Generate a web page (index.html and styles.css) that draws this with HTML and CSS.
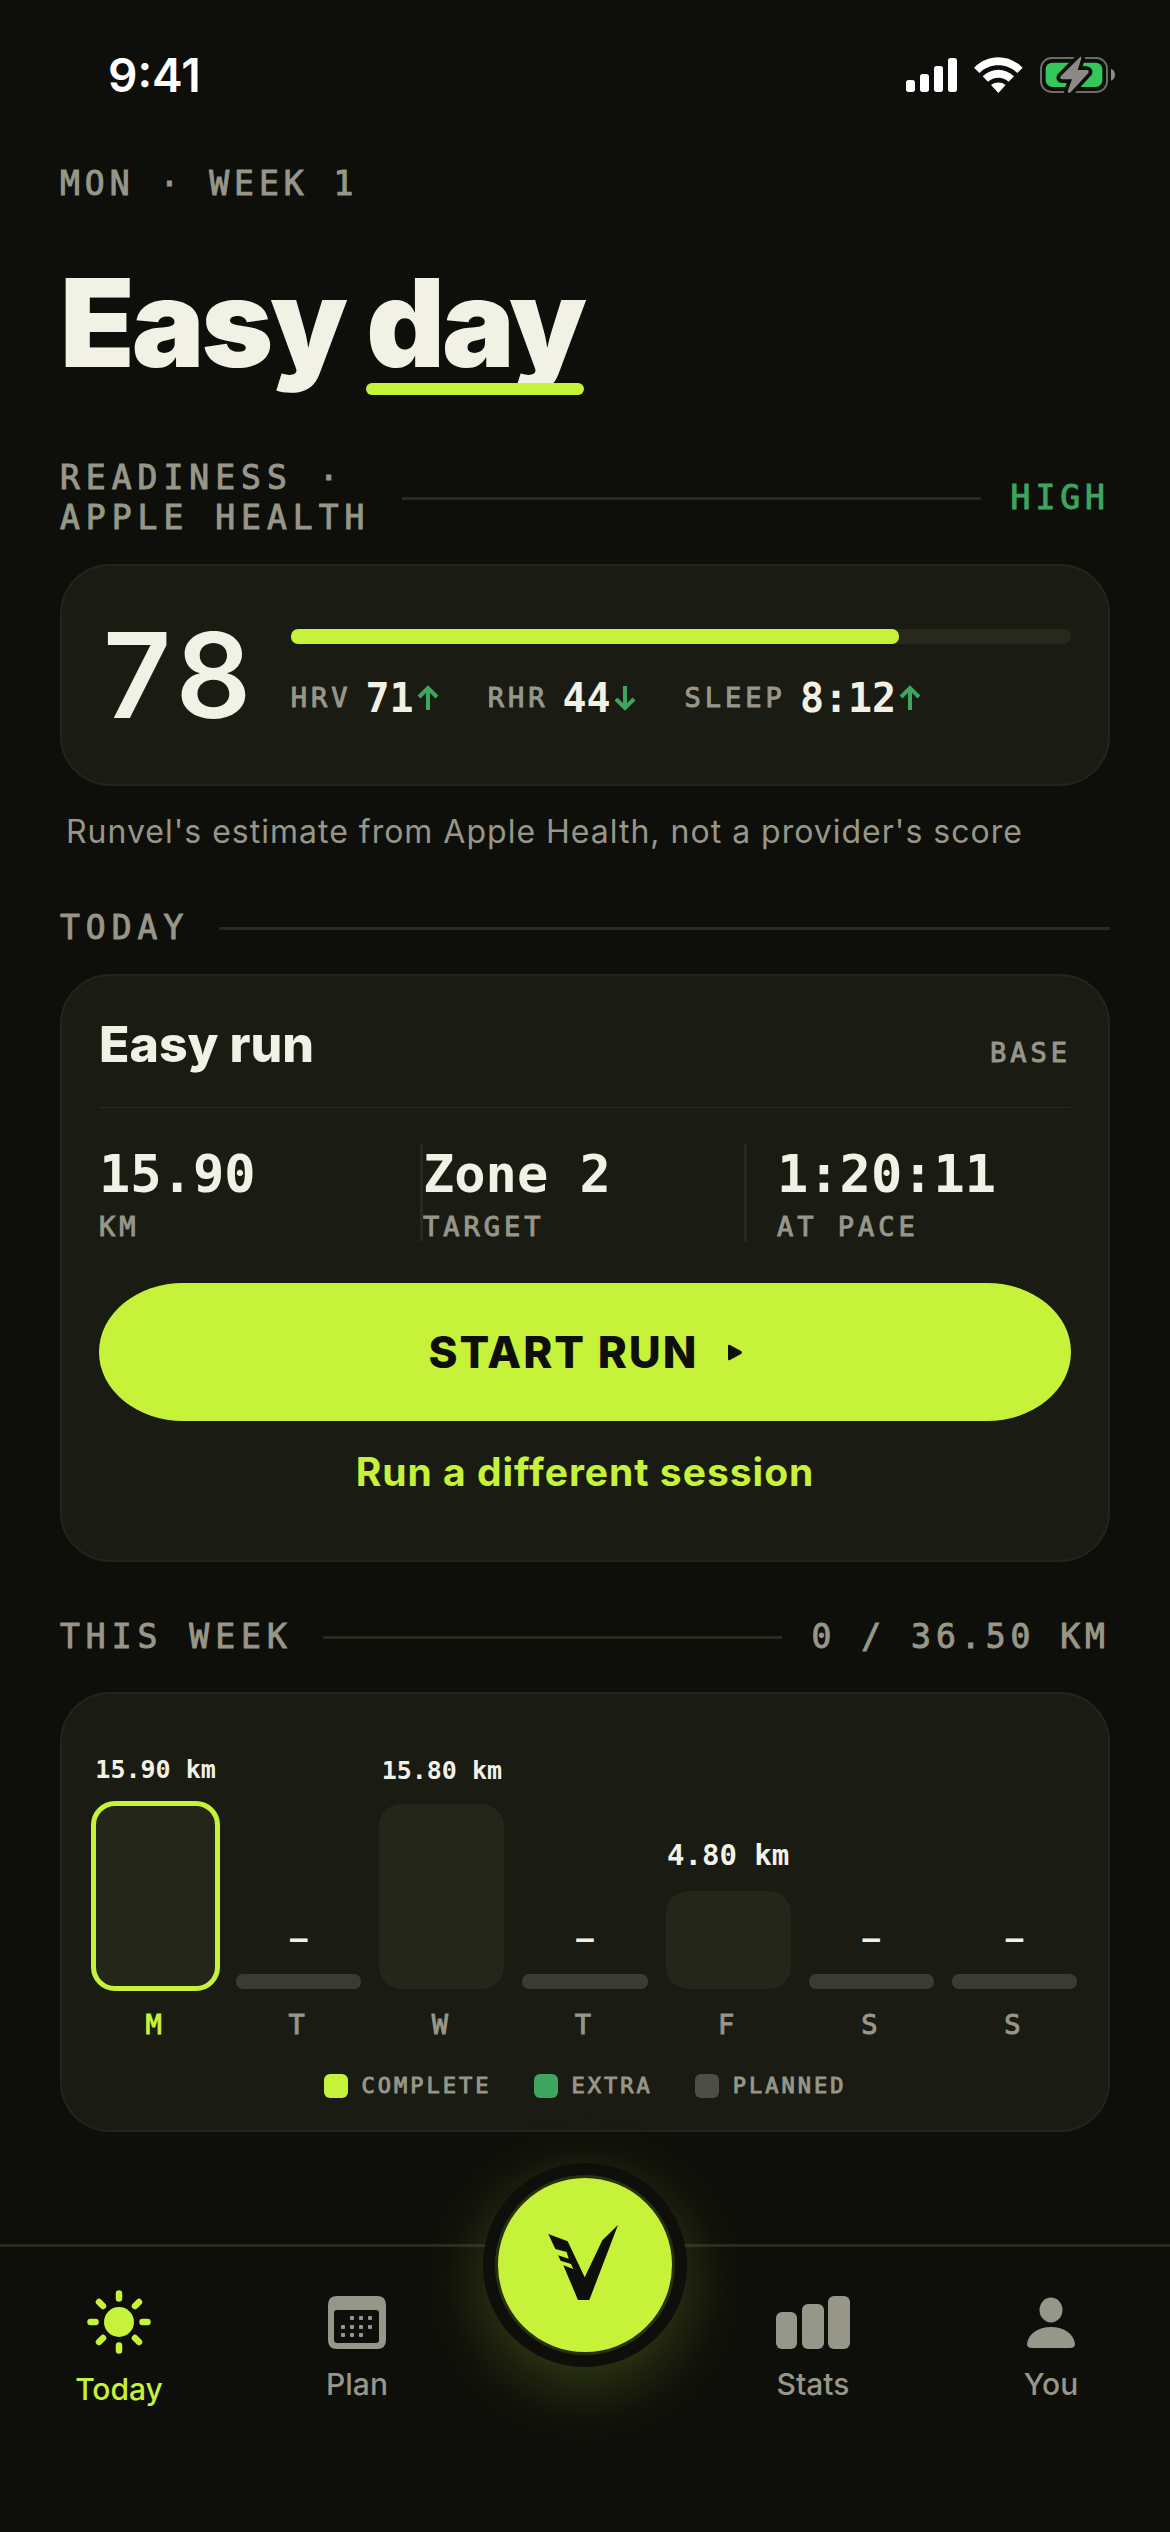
FILE: index.html
```html
<!DOCTYPE html>
<html lang="en">
<head>
<meta charset="utf-8">
<meta name="viewport" content="width=device-width, initial-scale=1">
<title>Today</title>
<link rel="stylesheet" href="styles.css">
</head>
<body>
<svg class="sprite" aria-hidden="true">
  <symbol id="arrow-up" viewBox="0 0 22 26"><path d="M11 25V3M2 12l9-9 9 9" fill="none" stroke="currentColor" stroke-width="4"/></symbol>
  <symbol id="arrow-down" viewBox="0 0 22 26"><path d="M11 1v22M2 14l9 9 9-9" fill="none" stroke="currentColor" stroke-width="4"/></symbol>
</svg>

<header class="status">
  <span class="status-time">9:41</span>
  <span class="status-icons">
    <svg width="51" height="34" viewBox="0 0 153 102" fill="#fff" aria-hidden="true">
      <rect x="0" y="66" width="27" height="36" rx="8"/><rect x="42" y="48" width="27" height="54" rx="8"/><rect x="84" y="24" width="27" height="78" rx="8"/><rect x="126" y="0" width="27" height="102" rx="8"/>
    </svg>
    <svg width="49" height="36" viewBox="0 0 147 108" fill="#fff" aria-hidden="true">
      <path d="M0 32C41-10 105-10 146 32L130 48C98 17 48 17 16 48Z"/>
      <path d="M26 58C53 32 93 32 120 58L104 74C86 58 60 58 42 74Z"/>
      <path d="M51 84C64 74 82 74 95 84L73 108Z"/>
    </svg>
    <svg width="75" height="38" viewBox="0 0 225 114" aria-hidden="true">
      <rect x="3" y="6" width="198" height="102" rx="32" fill="none" stroke="#6c6c69" stroke-width="6"/>
      <path d="M213 38c16 5 16 31 0 36z" fill="#8a8a87"/>
      <rect x="17" y="20" width="170" height="73" rx="20" fill="#34c759"/>
      <path d="M121 2 62 61q-5 8 5 9H96L83 106q2 8 9 3L145 51q4-8-5-9H113L124 7q-1-6-3-5z" fill="#8a8a87" stroke="#0e0f0a" stroke-width="22" stroke-linejoin="round" paint-order="stroke"/>
    </svg>
  </span>
</header>

<main class="screen">
  <p class="eyebrow">MON · WEEK 1</p>
  <h1 class="title">Easy <span class="title-mark">day</span></h1>

  <section>
    <header class="section-head">
      <h2 class="section-label">READINESS · APPLE HEALTH</h2>
      <span class="rule"></span>
      <span class="section-value good">HIGH</span>
    </header>
    <div class="card readiness">
      <span class="score">78</span>
      <div class="readiness-body">
        <div class="meter"><div class="meter-fill" style="width:78%"></div></div>
        <dl class="metrics">
          <div class="metric"><dt>HRV</dt><dd>71<svg class="arrow"><use href="#arrow-up"/></svg></dd></div>
          <div class="metric"><dt>RHR</dt><dd>44<svg class="arrow"><use href="#arrow-down"/></svg></dd></div>
          <div class="metric"><dt>SLEEP</dt><dd>8:12<svg class="arrow"><use href="#arrow-up"/></svg></dd></div>
        </dl>
      </div>
    </div>
    <p class="note">Runvel's estimate from Apple Health, not a provider's score</p>
  </section>

  <section class="section">
    <header class="section-head">
      <h2 class="section-label">TODAY</h2>
      <span class="rule"></span>
    </header>
    <div class="card session">
      <div class="session-head">
        <h3 class="session-name">Easy run</h3>
        <span class="small-label">BASE</span>
      </div>
      <dl class="stats">
        <div class="stat"><dd>15.90</dd><dt class="small-label">KM</dt></div>
        <div class="stat divided"><dd>Zone 2</dd><dt class="small-label">TARGET</dt></div>
        <div class="stat divided inset"><dd>1:20:11</dd><dt class="small-label">AT PACE</dt></div>
      </dl>
      <button class="start" type="button">START RUN
        <svg width="15" height="17" viewBox="0 0 15 17" aria-hidden="true"><path d="M1 2Q1 0 3 1L14 7Q16 8.500 14 10L3 16Q1 17 1 15Z" fill="currentColor"/></svg>
      </button>
      <a class="alternate" href="#sessions">Run a different session</a>
    </div>
  </section>

  <section class="section week">
    <header class="section-head">
      <h2 class="section-label">THIS WEEK</h2>
      <span class="rule"></span>
      <span class="section-value">0 / 36.50 KM</span>
    </header>
    <div class="card chart-card">
      <ol class="chart">
        <li class="day today"><span class="amount long">15.90 km</span><span class="bar" style="height:186px"></span><span class="weekday">M</span></li>
        <li class="day"><span class="amount">–</span><span class="bar rest"></span><span class="weekday">T</span></li>
        <li class="day"><span class="amount long">15.80 km</span><span class="bar" style="height:185px"></span><span class="weekday">W</span></li>
        <li class="day"><span class="amount">–</span><span class="bar rest"></span><span class="weekday">T</span></li>
        <li class="day"><span class="amount">4.80 km</span><span class="bar" style="height:98px"></span><span class="weekday">F</span></li>
        <li class="day"><span class="amount">–</span><span class="bar rest"></span><span class="weekday">S</span></li>
        <li class="day"><span class="amount">–</span><span class="bar rest"></span><span class="weekday">S</span></li>
      </ol>
      <ul class="legend">
        <li><span class="swatch complete"></span>COMPLETE</li>
        <li><span class="swatch extra"></span>EXTRA</li>
        <li><span class="swatch planned"></span>PLANNED</li>
      </ul>
    </div>
  </section>
</main>

<nav class="tabs">
  <a class="tab active" href="#today">
    <svg width="64" height="64" viewBox="-32 -32 64 64" aria-hidden="true">
      <circle r="15" fill="currentColor"/>
      <path d="M0-28.500v5M0 28.500v-5M-28.500 0h5M28.500 0h-5M-20-20l4 4M20 20l-4-4M-20 20l4-4M20-20l-4 4" stroke="currentColor" stroke-width="6.500" stroke-linecap="round"/>
    </svg>
    Today
  </a>
  <a class="tab" href="#plan">
    <svg width="58" height="53" viewBox="0 0 58 53" aria-hidden="true">
      <path fill="currentColor" fill-rule="evenodd" d="M9 0H49Q58 0 58 9V44Q58 53 49 53H9Q0 53 0 44V9Q0 0 9 0ZM9 14Q6 14 6 17V44Q6 47 9 47H48Q51 47 51 44V17Q51 14 48 14Z"/>
      <g fill="currentColor">
        <rect x="22" y="20" width="4" height="4" rx="1"/><rect x="31" y="20" width="4" height="4" rx="1"/><rect x="40" y="20" width="4" height="4" rx="1"/>
        <rect x="13" y="29" width="4" height="4" rx="1"/><rect x="22" y="29" width="4" height="4" rx="1"/><rect x="31" y="29" width="4" height="4" rx="1"/><rect x="40" y="29" width="4" height="4" rx="1"/>
        <rect x="13" y="37" width="4" height="4" rx="1"/><rect x="22" y="37" width="4" height="4" rx="1"/><rect x="31" y="37" width="4" height="4" rx="1"/>
      </g>
    </svg>
    Plan
  </a>
  <div class="tab-center">
    <button class="fab" type="button" aria-label="Record">
      <svg width="174" height="174" viewBox="174 144 522 522" aria-hidden="true">
        <path fill="#0e0f0a" d="M325 312 383 334 434 442 487 331 534 285 448 510H414L370 406 400 417 393 402 362 392 354 376 386 386 380 366 346 357Z"/>
      </svg>
    </button>
  </div>
  <a class="tab" href="#stats">
    <svg width="74" height="53" viewBox="0 0 74 53" fill="currentColor" aria-hidden="true">
      <rect x="0" y="16" width="21" height="37" rx="6"/><rect x="26" y="8" width="22" height="45" rx="6"/><rect x="52" y="0" width="22" height="53" rx="6"/>
    </svg>
    Stats
  </a>
  <a class="tab" href="#you">
    <svg width="48" height="53" viewBox="0 0 48 53" fill="currentColor" aria-hidden="true">
      <ellipse cx="24" cy="14" rx="11.500" ry="12.500"/>
      <path d="M5 52Q0 52 0 48C1 38 11 31 24 31S47 38 48 48Q48 52 43 52Z"/>
    </svg>
    You
  </a>
</nav>
</body>
</html>
```
FILE: styles.css
```css
:root {
  --bg: #0e0f0a;
  --card: #1a1b13;
  --line: #29291d;
  --text: #f1f1e5;
  --muted: #969689;
  --lime: #c7f23a;
  --green: #3da55f;
  --sans: Inter, "Liberation Sans", sans-serif;
  --mono: "DejaVu Sans Mono", "Liberation Mono", monospace;
}

* {
  box-sizing: border-box;
}

body {
  margin: 0;
  min-height: 100vh;
  display: flex;
  flex-direction: column;
  background: var(--bg);
  color: var(--text);
  font-family: var(--sans);
}

h1, h2, h3, p, dl, dd, ol, ul {
  margin: 0;
  padding: 0;
}

ol, ul {
  list-style: none;
}

svg {
  display: block;
  flex: none;
}

.sprite {
  position: absolute;
  width: 0;
  height: 0;
}

/* Status bar */
.status {
  display: flex;
  align-items: center;
  justify-content: space-between;
  padding: 48px 55px 48px 108px;
}

.status-time {
  font-size: 46px;
  font-weight: 600;
  line-height: 54px;
  color: #fff;
}

.status-icons {
  display: flex;
  align-items: center;
  gap: 17px;
}

/* Screen */
.screen {
  padding: 0 60px;
}

/* The mono face has no medium weight; a hairline stroke thickens the labels */
.eyebrow,
.section-label,
.section-value,
.small-label,
.weekday,
.metric dt,
.legend {
  -webkit-text-stroke: 1px currentColor;
}

.eyebrow {
  margin-top: 14px;
  font: 400 33px/40px var(--mono);
  letter-spacing: 5px;
  color: var(--muted);
}

.title {
  margin-top: 44px;
  font-size: 122px;
  font-weight: 900;
  line-height: 150px;
  letter-spacing: -3px;
}

.title-mark {
  position: relative;
  display: inline-block;
}

.title-mark::after {
  content: "";
  position: absolute;
  right: 0;
  bottom: 3px;
  left: 0;
  height: 12px;
  border-radius: 6px;
  background: var(--lime);
}

.title + section {
  margin-top: 60px;
}

.section {
  margin-top: 55px;
}

.section-head {
  display: flex;
  align-items: center;
  gap: 30px;
  margin-bottom: 26px;
}

.week .section-head {
  margin-bottom: 35px;
}

.section-label,
.section-value {
  flex: none;
  font: 400 33px/40px var(--mono);
  color: var(--muted);
}

.section-label {
  max-width: 312px;
  letter-spacing: 6px;
}

.section-value {
  letter-spacing: 5px;
}

.section-value.good {
  color: var(--green);
}

.rule {
  flex: 1;
  height: 3px;
  background: var(--line);
}

.card {
  border: 2px solid #24251a;
  border-radius: 50px;
  background: var(--card);
}

.small-label {
  font: 400 27px/28px var(--mono);
  letter-spacing: 4px;
  color: var(--muted);
}

/* Readiness */
.readiness {
  display: flex;
  align-items: center;
  gap: 39px;
  padding: 50px 37px;
}

.score {
  font-size: 118px;
  font-weight: 600;
  line-height: 118px;
  font-variant-numeric: tabular-nums;
}

.readiness-body {
  flex: 1;
}

.meter {
  height: 15px;
  border-radius: 7px;
  background: #28281d;
}

.meter-fill {
  height: 100%;
  border-radius: 7px;
  background: var(--lime);
}

.metrics {
  display: flex;
  gap: 49px;
  margin-top: 31px;
}

.metric {
  display: flex;
  align-items: center;
  gap: 14px;
}

.metric dt {
  font: 400 27px/46px var(--mono);
  letter-spacing: 4px;
  color: var(--muted);
}

.metric dd {
  display: flex;
  align-items: center;
  gap: 3px;
  font: 700 40px/46px var(--mono);
}

.arrow {
  width: 22px;
  height: 26px;
  color: var(--green);
}

.note {
  margin-top: 25px;
  padding-left: 6px;
  font-size: 32px;
  line-height: 42px;
  letter-spacing: 1px;
  color: var(--muted);
}

/* Session */
.session {
  padding: 37px 37px 64px;
}

.session-head {
  display: flex;
  align-items: baseline;
  justify-content: space-between;
  padding-bottom: 32px;
  border-bottom: 1px solid var(--line);
}

.session-name {
  font-size: 50px;
  font-weight: 800;
  line-height: 62px;
}

.stats {
  display: grid;
  grid-template-columns: repeat(3, 1fr);
  margin-top: 36px;
}

.stat {
  position: relative;
  display: flex;
  flex-direction: column;
  gap: 9px;
}

.stat dd {
  font: 700 52px/60px var(--mono);
}

.stat.divided::before {
  content: "";
  position: absolute;
  top: 0;
  bottom: 0;
  left: -3px;
  width: 3px;
  background: var(--line);
}

.stat.inset {
  padding-left: 30px;
}

.start {
  display: flex;
  align-items: center;
  justify-content: center;
  gap: 28px;
  width: 100%;
  margin-top: 42px;
  padding: 39px;
  border: 0;
  border-radius: 84px / 69px;
  background: var(--lime);
  color: var(--bg);
  font: 800 44px/60px var(--sans);
  letter-spacing: 2px;
}

.alternate {
  display: block;
  margin-top: 27px;
  font-size: 39px;
  font-weight: 700;
  line-height: 48px;
  letter-spacing: 1px;
  text-align: center;
  text-decoration: none;
  color: var(--lime);
}

/* Week */
.chart-card {
  padding: 59px 31px 32px;
}

.chart {
  display: grid;
  grid-template-columns: repeat(7, 1fr);
  align-items: end;
  gap: 18px;
}

.day {
  display: flex;
  flex-direction: column;
  align-items: stretch;
  text-align: center;
}

.amount {
  margin-bottom: 16px;
  font: 700 29px/40px var(--mono);
  white-space: nowrap;
}

.amount.long {
  font-size: 25px;
  line-height: 34px;
}

.bar {
  border-radius: 22px;
  background: #24261a;
}

.bar.rest {
  height: 15px;
  border-radius: 7px;
  background: #3b3b34;
}

.today .bar {
  outline: 5px solid var(--lime);
  outline-offset: -3px;
}

.weekday {
  margin-top: 20px;
  font: 400 27px/32px var(--mono);
  letter-spacing: 4px;
  color: var(--muted);
}

.today .weekday {
  color: var(--lime);
}

.legend {
  display: flex;
  justify-content: center;
  gap: 42px;
  margin-top: 33px;
}

.legend li {
  display: flex;
  align-items: center;
  gap: 14px;
  font: 400 22px/24px var(--mono);
  letter-spacing: 3px;
  color: var(--muted);
}

.swatch {
  width: 24px;
  height: 24px;
  border-radius: 6px;
}

.complete {
  background: var(--lime);
}

.extra {
  background: var(--green);
}

.planned {
  background: #4e4e46;
}

/* Tab bar */
.tabs {
  display: flex;
  align-items: center;
  margin-top: auto;
  padding: 43px 0 125px;
  border-top: 3px solid var(--line);
}

.tab {
  flex: 1;
  display: flex;
  flex-direction: column;
  align-items: center;
  gap: 17px;
  font-size: 30px;
  font-weight: 500;
  line-height: 36px;
  text-decoration: none;
  color: var(--muted);
}

.tab.active {
  color: var(--lime);
}

.tab-center {
  display: flex;
  justify-content: center;
  align-self: flex-start;
  width: 218px;
  margin-top: -127px;
}

.fab {
  width: 204px;
  height: 204px;
  padding: 12px;
  border: 0;
  border-radius: 50%;
  background: var(--bg);
  box-shadow: 0 18px 66px rgba(199, 242, 58, 0.22);
}

.fab svg {
  box-sizing: content-box;
  border: 3px solid #29300f;
  border-radius: 50%;
  background: var(--lime);
}
```
